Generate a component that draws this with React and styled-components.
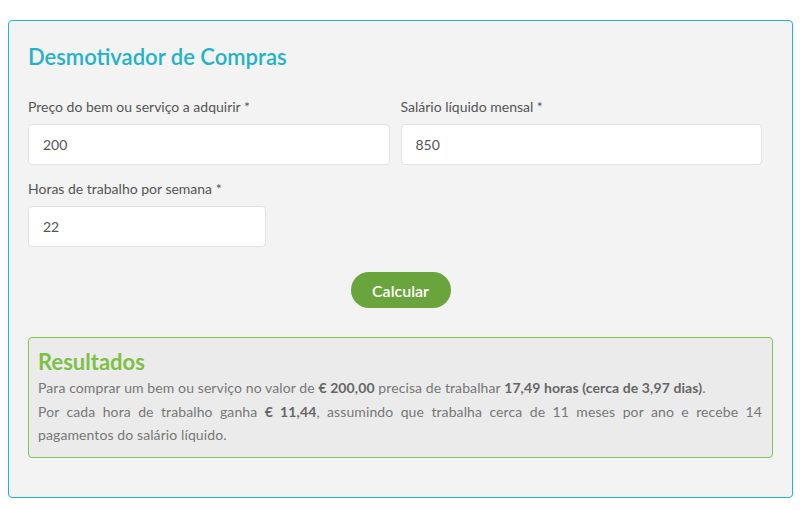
import styled, { createGlobalStyle } from "styled-components";

const Global = createGlobalStyle`
  body {
    margin: 0;
    background: #ffffff;
    font-family: Lato, "Noto Sans", sans-serif;
  }
`;

const Page = styled.div`
  padding: 20px 7px 13px 8px;
`;

const Panel = styled.div`
  border: 1px solid #1fb6cd;
  border-radius: 4px;
  background: #f3f3f3;
  padding: 23px 19px 39px 19px;
`;

const Title = styled.h2`
  margin: 0 0 29px 0;
  font-size: 22px;
  font-weight: 600;
  line-height: 26px;
  color: #22b3c9;
`;

const Row = styled.div`
  display: grid;
  grid-template-columns: ${(p) => p.$cols};
  column-gap: 11px;
  padding-right: 11px;
  margin-bottom: 16px;
`;

const Field = styled.div`
  display: flex;
  flex-direction: column;
`;

const Label = styled.label`
  font-size: 14px;
  color: #555;
  margin-bottom: 9px;
  line-height: 16px;
`;

const Input = styled.input`
  box-sizing: border-box;
  height: 41px;
  border: 1px solid #e2e2e2;
  border-radius: 4px;
  background: #fff;
  padding: 0 14px;
  font-family: inherit;
  font-size: 14px;
  color: #555;
  outline: none;
`;

const Actions = styled.div`
  display: flex;
  justify-content: center;
  margin: 25px 0 29px;
`;

const Button = styled.button`
  width: 100px;
  height: 36px;
  border: none;
  border-radius: 18px;
  background: #6aa43c;
  color: #fff;
  font-family: inherit;
  font-size: 16px;
  font-weight: 600;
`;

const Results = styled.div`
  border: 1px solid #80c64f;
  border-radius: 4px;
  background: #ebebeb;
  padding: 11px 10px 10px 9px;
`;

const ResultsTitle = styled.h3`
  margin: 0 0 1px 0;
  font-size: 22px;
  font-weight: 700;
  color: #7cc144;
  line-height: 26px;
`;

const Text = styled.p`
  margin: 0;
  font-size: 14px;
  line-height: 23.5px;
  letter-spacing: 0.1px;
  color: #777;
  text-align: justify;

  b {
    color: #666;
    font-weight: 700;
  }
`;

export default function App() {
  return (
    <Page>
      <Global />
      <Panel>
        <Title>Desmotivador de Compras</Title>
        <Row $cols="1fr 1fr">
          <Field>
            <Label>Preço do bem ou serviço a adquirir *</Label>
            <Input defaultValue="200" />
          </Field>
          <Field>
            <Label>Salário líquido mensal *</Label>
            <Input defaultValue="850" />
          </Field>
        </Row>
        <Row $cols="238px">
          <Field>
            <Label>Horas de trabalho por semana *</Label>
            <Input defaultValue="22" />
          </Field>
        </Row>
        <Actions>
          <Button>Calcular</Button>
        </Actions>
        <Results>
          <ResultsTitle>Resultados</ResultsTitle>
          <Text>
            Para comprar um bem ou serviço no valor de <b>€ 200,00</b> precisa de trabalhar{" "}
            <b>17,49 horas (cerca de 3,97 dias)</b>.
          </Text>
          <Text>
            Por cada hora de trabalho ganha <b>€ 11,44</b>, assumindo que trabalha cerca de 11 meses
            por ano e recebe 14 pagamentos do salário líquido.
          </Text>
        </Results>
      </Panel>
    </Page>
  );
}
